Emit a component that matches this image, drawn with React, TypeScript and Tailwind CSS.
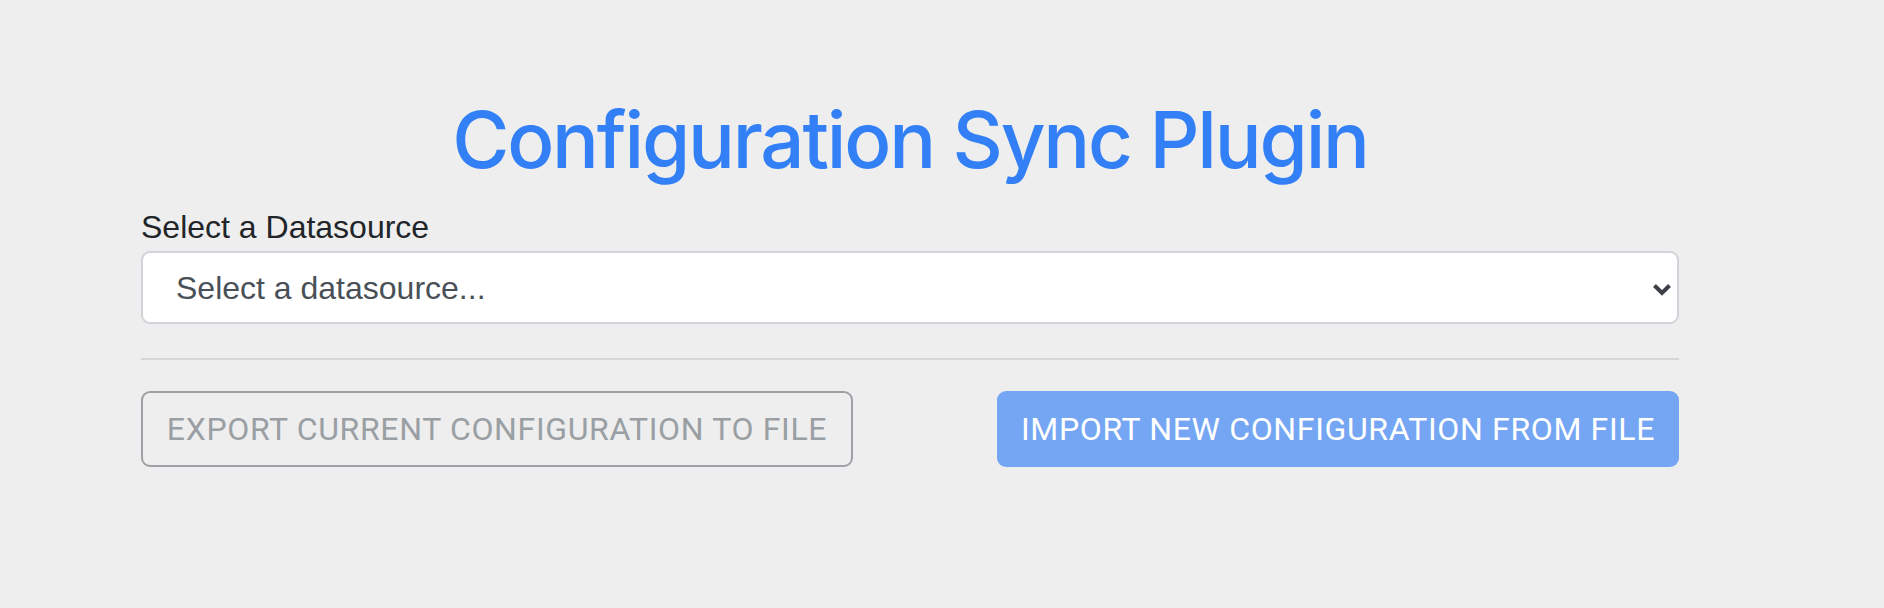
import { useState } from "react";

export default function App() {
  const [source, setSource] = useState("");

  return (
    <div className="min-h-screen w-full bg-[#eeeeee] font-['Liberation_Sans',Arial,sans-serif]">
      <div className="pl-[141px] pt-[92px]">
        <div className="w-[1538px]">
          {/* Title */}
          <h1 className="text-center font-['Inter',sans-serif] text-[78px] leading-[96px] font-medium tracking-[-2.2px] text-[#3380f6]">
            Configuration Sync Plugin
          </h1>

          {/* Datasource */}
          <label className="mt-[15px] block text-[32px] leading-[48px] text-[#212529]">
            Select a Datasource
          </label>
          <div className="relative h-[73px] w-full rounded-[9px] border-2 border-[#d0d4d9] bg-white">
            <select
              value={source}
              onChange={e => setSource(e.target.value)}
              className="h-full w-full appearance-none bg-transparent pl-[33px] pr-[40px] text-[32px] text-[#495057] outline-none"
            >
              <option value="">Select a datasource...</option>
            </select>
            <svg
              className="pointer-events-none absolute right-[5px] top-[30px]"
              width="20"
              height="13"
              viewBox="0 0 20 13"
              fill="none"
            >
              <polyline points="2.5,2.5 10,10 17.5,2.5" stroke="#3b4046" strokeWidth="4" strokeLinejoin="miter" />
            </svg>
          </div>

          <hr className="mt-[34px] border-0 border-t-2 border-[#d6d6d6]" />

          {/* Actions */}
          <div className="mt-[31px] flex items-center justify-between font-['Roboto',sans-serif] tracking-[0.65px]">
            <button
              disabled
              className="flex h-[76px] w-[712px] items-center justify-center rounded-[9px] border-2 border-[#9da1a6] text-[32px] uppercase text-[#9a9fa4]"
            >
              Export current configuration to file
            </button>
            <button
              disabled
              className="flex h-[76px] w-[682px] items-center justify-center rounded-[9px] bg-[#74a6f3] text-[32px] uppercase text-white"
            >
              Import new configuration from file
            </button>
          </div>
        </div>
      </div>
    </div>
  );
}
